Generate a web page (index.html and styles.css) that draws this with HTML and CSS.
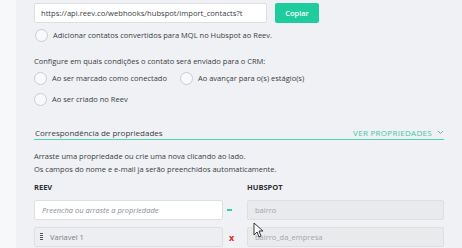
FILE: index.html
```html
<!DOCTYPE html>
<html lang="pt">

<head>
    <meta charset="UTF-8">
    <meta name="viewport" content="width=device-width, initial-scale=1.0">
    <title>Integração Hubspot</title>
    <link rel="stylesheet" href="styles.css">
</head>

<body>
    <div class="sidebar"></div>

    <div class="main">
        <!-- Webhook -->
        <div class="url-row">
            <div class="url-box">https://api.reev.co/webhooks/hubspot/import_contacts?t</div>
            <button class="copy-btn">Copiar</button>
        </div>

        <label class="radio first">
            <span class="circle"></span>
            Adicionar contatos convertidos para MQL no Hubspot ao Reev.
        </label>

        <!-- Condicoes -->
        <p class="hint">Configure em quais condições o contato será enviado para o CRM:</p>
        <div class="radio-row">
            <label class="radio wide"><span class="circle"></span>Ao ser marcado como conectado</label>
            <label class="radio"><span class="circle"></span>Ao avançar para o(s) estágio(s)</label>
        </div>
        <label class="radio"><span class="circle"></span>Ao ser criado no Reev</label>

        <!-- Propriedades -->
        <div class="section-title">
            <span>Correspondência de propriedades</span>
            <a href="#" class="see-all">VER PROPRIEDADES
                <svg width="7" height="5" viewBox="0 0 7 5"><path d="M1 1l2.5 2.5L6 1" fill="none" stroke="#9aa0a8" stroke-width="1"/></svg>
            </a>
        </div>
        <p class="desc">Arraste uma propriedade ou crie uma nova clicando ao lado.<br>Os campos do nome e e-mail ja serão preenchidos automaticamente.</p>

        <div class="map-grid">
            <div class="col-title">REEV</div>
            <div></div>
            <div class="col-title">HUBSPOT</div>

            <div class="field empty">Preencha ou arraste a propriedade</div>
            <div class="action"><span class="add"></span></div>
            <div class="field locked">bairro</div>

            <div class="field filled">
                <svg width="3" height="8" viewBox="0 0 3 8"><path d="M0 0h3v1H0zM0 2h3v1H0zM0 4h3v1H0zM0 6h3v1H0z" fill="#555"/></svg>
                Variavel 1
            </div>
            <div class="action remove">x</div>
            <div class="field locked cursor-cell">bairro_da_empresa
                <svg class="cursor" width="11" height="16" viewBox="0 0 11 16"><path d="M1 1v12l3-3 2 5 2-1-2-5h4z" fill="#fff" stroke="#222" stroke-width="0.9"/></svg>
            </div>
        </div>
    </div>
</body>

</html>
```
FILE: styles.css
```css
/* Base */
body {
    font-family: "Open Sans", "Liberation Sans", sans-serif;
    margin: 0;
    padding: 0;
    height: 248px;
    overflow: hidden;
    background: #eff1f4;
    color: #4b4f56;
    display: flex;
}

.sidebar {
    width: 16px;
    background: #f7f8fa;
    flex-shrink: 0;
}

.main {
    flex: 1;
    padding: 3px 18px 0 18px;
    font-size: 7.5px;
}

/* Webhook url */
.url-row {
    display: flex;
    align-items: stretch;
    height: 20px;
}

.url-box {
    width: 225px;
    background: white;
    border: 1px solid #dcdfe4;
    border-radius: 2px;
    padding: 0 0 0 6px;
    display: flex;
    align-items: center;
    white-space: nowrap;
    overflow: hidden;
    color: #3a3d42;
    font-size: 7.6px;
}

.copy-btn {
    width: 44px;
    margin-left: 8px;
    background: #1fcc9d;
    border: none;
    border-radius: 2px;
    color: white;
    font-family: inherit;
    font-size: 7.5px;
    font-weight: 600;
    padding: 0;
}

/* Radios */
.radio {
    display: flex;
    align-items: center;
    gap: 5px;
    height: 14px;
    color: #3a3d42;
}

.radio.first {
    margin-top: 5px;
    margin-left: 1px;
}

.radio.wide {
    width: 146px;
}

.circle {
    width: 11px;
    height: 11px;
    border: 1px solid #c9ccd2;
    border-radius: 50%;
    background: #f8f9fb;
    flex-shrink: 0;
}

.hint {
    margin: 14px 0 5px;
    color: #3a3d42;
}

.radio-row {
    display: flex;
    margin-bottom: 7px;
}

/* Propriedades */
.section-title {
    display: flex;
    justify-content: space-between;
    align-items: flex-end;
    margin-top: 21px;
    padding: 0 0 1px 1px;
    border-bottom: 1px solid #4fd1b5;
    font-size: 8px;
    color: #3a3d42;
}

.see-all {
    color: #3fc6a9;
    text-decoration: none;
    font-size: 8px;
    letter-spacing: 0.3px;
    display: flex;
    align-items: center;
    gap: 5px;
    margin-right: 0;
}

.desc {
    margin: 10px 0 0;
    line-height: 13px;
    color: #3a3d42;
}

.map-grid {
    display: grid;
    grid-template-columns: 189px 24px 197px;
    grid-template-rows: 13px 20px 20px;
    row-gap: 7px;
    margin-top: 4px;
    align-items: center;
}

.col-title {
    font-weight: 700;
    font-size: 7.5px;
    color: #2e3136;
}

.field {
    height: 20px;
    box-sizing: border-box;
    border-radius: 2px;
    border: 1px solid #dddfe3;
    display: flex;
    align-items: center;
    padding-left: 7px;
    gap: 7px;
}

.field.empty {
    background: white;
    font-style: italic;
    color: #8a8d92;
}

.field.filled {
    background: #eceef1;
    color: #7b7e84;
    padding-left: 5px;
}

.field.locked {
    background: #e9eaec;
    color: #a3a6ab;
}

.action {
    display: flex;
    align-items: center;
    font-size: 9px;
    padding-left: 4px;
}

.add {
    display: block;
    width: 5px;
    height: 2px;
    background: #2fd1ae;
}

.action.remove {
    color: #e0281f;
    font-weight: 700;
    padding-left: 6px;
}

.cursor-cell {
    position: relative;
}

.cursor {
    position: absolute;
    left: 5px;
    top: -6px;
}
```
